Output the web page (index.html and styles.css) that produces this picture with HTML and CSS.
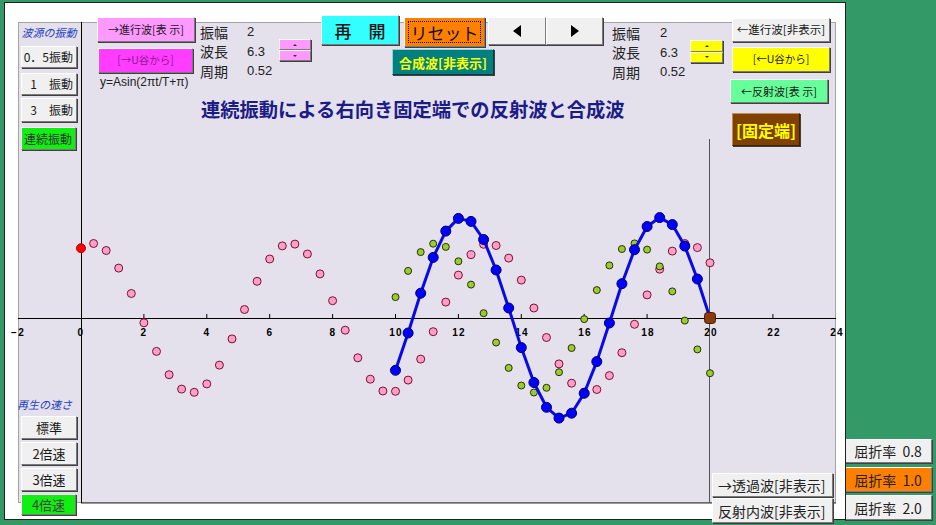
FILE: index.html
```html
<!DOCTYPE html>
<html lang="ja">
<head>
<meta charset="utf-8">
<title>連続振動による右向き固定端での反射波と合成波</title>
<link rel="stylesheet" href="styles.css">
</head>
<body>
<div class="stage">
  <div class="frame">
    <svg class="plot" viewBox="5 3 840 516" width="840" height="516">
      <rect class="bg" x="18.5" y="22.5" width="817" height="480"/>
      <line class="bottomline" x1="81" y1="503" x2="836" y2="503"/>
      <line class="axis" x1="81.5" y1="22" x2="81.5" y2="503"/>
      <line class="axis" x1="18" y1="318.5" x2="836" y2="318.5"/>
      <line class="fixline" x1="709.5" y1="139" x2="709.5" y2="503"/>
      <g class="ticks">
        <line x1="143.9" y1="314" x2="143.9" y2="318"/>
        <line x1="206.8" y1="314" x2="206.8" y2="318"/>
        <line x1="269.7" y1="314" x2="269.7" y2="318"/>
        <line x1="332.6" y1="314" x2="332.6" y2="318"/>
        <line x1="395.5" y1="314" x2="395.5" y2="318"/>
        <line x1="458.4" y1="314" x2="458.4" y2="318"/>
        <line x1="521.3" y1="314" x2="521.3" y2="318"/>
        <line x1="584.2" y1="314" x2="584.2" y2="318"/>
        <line x1="647.1" y1="314" x2="647.1" y2="318"/>
        <line x1="772.9" y1="314" x2="772.9" y2="318"/>
      </g>
      <g class="tlabels">
        <text x="18" y="336">−2</text>
        <text x="81" y="336">0</text>
        <text x="144" y="336">2</text>
        <text x="207" y="336">4</text>
        <text x="270" y="336">6</text>
        <text x="333" y="336">8</text>
        <text x="396" y="336">10</text>
        <text x="459" y="336">12</text>
        <text x="522" y="336">14</text>
        <text x="585" y="336">16</text>
        <text x="648" y="336">18</text>
        <text x="711" y="336">20</text>
        <text x="774" y="336">22</text>
        <text x="837" y="336">24</text>
      </g>
      <g id="waves"></g>
    </svg>

    <div class="leftcol">
      <div class="caption">波源の振動</div>
      <div class="btn lb b05">0．5振動</div>
      <div class="btn lb b1">1　振動</div>
      <div class="btn lb b3">3　振動</div>
      <div class="btn lb green bc">連続振動</div>
      <div class="spacer"></div>
      <div class="caption cap2">再生の速さ</div>
      <div class="btn sb">標準</div>
      <div class="btn sb">2倍速</div>
      <div class="btn sb">3倍速</div>
      <div class="btn sb green s4">4倍速</div>
    </div>

    <div class="main">
      <div class="upper">
        <div class="center">
          <div class="toprow">
            <div class="groupA">
              <div class="btn pink">→進行波[表 示]</div>
              <div class="btn magenta">[→U谷から]</div>
              <div class="formula">y=Asin(2πt/T+π)</div>
            </div>
            <div class="params">
              <span class="pl">振幅</span><span class="pv">2</span>
              <span class="pl">波長</span><span class="pv">6.3</span>
              <span class="pl">周期</span><span class="pv">0.52</span>
            </div>
            <div class="spin pinkspin"><span class="half up"></span><span class="half down"></span></div>
            <div class="midgroup">
              <div class="midrow">
                <div class="btn cyan">再　開</div>
                <div class="btn orange"><span class="focus">リセット</span></div>
                <div class="arrows">
                  <div class="btn arrow"><svg width="8" height="12" viewBox="0 0 8 12"><polygon points="8,0 8,12 0,6"/></svg></div>
                  <div class="btn arrow"><svg width="8" height="12" viewBox="0 0 8 12"><polygon points="0,0 0,12 8,6"/></svg></div>
                </div>
              </div>
              <div class="btn teal">合成波[非表示]</div>
            </div>
            <div class="params rparams">
              <span class="pl">振幅</span><span class="pv">2</span>
              <span class="pl">波長</span><span class="pv">6.3</span>
              <span class="pl">周期</span><span class="pv">0.52</span>
            </div>
            <div class="spin yellowspin"><span class="half up"></span><span class="half down"></span></div>
          </div>
          <h1 class="title">連続振動による右向き固定端での反射波と合成波</h1>
        </div>
        <div class="rightcol">
          <div class="btn rb r1">←進行波[非表示]</div>
          <div class="btn rb yellow">[←U谷から]</div>
          <div class="btn rb lgreen">←反射波[表 示]</div>
          <div class="btn brown">[固定端]</div>
        </div>
      </div>
      <div class="bottomr">
        <div class="btn wide w1">→透過波[非表示]</div>
        <div class="btn wide w2">反射内波[非表示]</div>
      </div>
    </div>
  </div>

  <div class="side">
    <div class="btn kb k1">屈折率&nbsp; 0.8</div>
    <div class="btn kb k2 orangebg">屈折率&nbsp; 1.0</div>
    <div class="btn kb k3">屈折率&nbsp; 2.0</div>
  </div>
</div>
<script src="script.js"></script>
</body>
</html>
```

FILE: styles.css
```css
html, body {
  margin: 0;
  padding: 0;
  background: #339966;
}

.stage {
  width: 936px;
  height: 525px;
  display: flex;
  align-items: flex-start;
  background: #339966;
  overflow: hidden;
  font-family: "Noto Sans CJK JP", sans-serif;
}

.frame {
  position: relative;
  box-sizing: border-box;
  width: 842px;
  height: 518px;
  margin: 2px 0 0 4px;
  border: 1px solid #202020;
  background: #ffffff;
  display: flex;
}

.plot {
  position: absolute;
  top: 0;
  left: 0;
  z-index: 0;
}

.plot .bg { fill: #e4e0ec; stroke: #a4a4a4; stroke-width: 1; }
.plot .bottomline { stroke: #303030; stroke-width: 1; }
.plot .axis { stroke: #000000; stroke-width: 1; }
.plot .fixline { stroke: #555555; stroke-width: 1; }
.plot .ticks line { stroke: #000000; stroke-width: 1; }
.plot .tlabels text {
  font-family: "Liberation Sans", Arial, sans-serif;
  font-weight: bold;
  font-size: 10px;
  letter-spacing: 1.2px;
  text-anchor: middle;
  fill: #000000;
}

.plot .dp { fill: #ff9ec8; stroke: #7a1030; stroke-width: 1; }
.plot .dg { fill: #99cc33; stroke: #2a3000; stroke-width: 1; }
.plot .bl { fill: none; stroke: #0a0ae6; stroke-width: 3; stroke-linejoin: round; }
.plot .db { fill: #0000ff; stroke: #000060; stroke-width: 1; }
.plot .dr { fill: #ff0000; stroke: #c00000; stroke-width: 1; }
.plot .end { fill: #8b3a0e; stroke: #4a1a00; stroke-width: 1; }

/* ---------- buttons ---------- */
.btn {
  box-sizing: border-box;
  display: flex;
  align-items: center;
  justify-content: center;
  background: #f0f0f0;
  border: 1px solid;
  border-color: #ffffff #7a7a7a #7a7a7a #ffffff;
  box-shadow: 1px 1px 0 #404040;
  color: #1a1a1a;
  white-space: nowrap;
  line-height: 1;
  overflow: hidden;
  font-family: "Noto Sans CJK JP", sans-serif;
}

/* ---------- left column ---------- */
.leftcol {
  position: relative;
  z-index: 1;
  width: 56px;
  margin-left: 16px;
  height: 516px;
  display: flex;
  flex-direction: column;
  flex-shrink: 0;
}

.caption {
  height: 12px;
  line-height: 12px;
  font-size: 11px;
  font-style: italic;
  color: #1f3fbf;
  text-align: center;
  white-space: nowrap;
  margin-top: 23px;
}

.cap2 {
  margin-top: 0;
  margin-left: -4px;
  text-align: left;
}

.lb {
  width: 56px;
  height: 22px;
  font-size: 12px;
  justify-content: flex-end;
  padding-right: 3px;
}

.b05 { margin-top: 8px; }
.b1 { margin-top: 5px; }
.b3 { margin-top: 3px; height: 24px; }
.bc { margin-top: 5px; height: 23px; width: 55px; color: #333; }

.green { background: #11ee11; }

.spacer { flex: 1; }

.sb {
  width: 56px;
  height: 23px;
  font-size: 13px;
  margin-top: 3px;
}
.cap2 + .sb { margin-top: 6px; }
.s4 { height: 21px; width: 55px; margin-bottom: 4px; color: #444; }

/* ---------- main ---------- */
.main {
  position: relative;
  z-index: 1;
  flex: 1;
  height: 516px;
  display: flex;
  flex-direction: column;
}

.upper {
  display: flex;
  align-items: flex-start;
}

.center {
  margin-left: 20px;
  width: 626px;
  display: flex;
  flex-direction: column;
}

.toprow {
  display: flex;
  align-items: flex-start;
}

.groupA {
  width: 98px;
  margin-top: 14px;
  display: flex;
  flex-direction: column;
}

.pink {
  width: 98px;
  height: 25px;
  background: #ff99ff;
  font-size: 11px;
}

.magenta {
  width: 95px;
  height: 25px;
  margin-top: 6px;
  margin-left: 1px;
  background: #ff3cff;
  color: #8e1a8e;
  font-size: 10.5px;
}

.formula {
  margin-top: 2px;
  margin-left: 3px;
  height: 14px;
  line-height: 14px;
  font-family: "Liberation Sans", Arial, sans-serif;
  font-size: 12px;
  color: #222;
  white-space: nowrap;
}

.params {
  margin-left: 5px;
  margin-top: 19px;
  width: 79px;
  display: grid;
  grid-template-columns: 47px auto;
  grid-auto-rows: 19.5px;
  align-items: center;
}

.rparams {
  margin-left: 9px;
  margin-top: 20px;
  width: 78px;
  grid-template-columns: 48px auto;
}

.pl {
  font-size: 14px;
  line-height: 1;
  color: #222;
}

.pv {
  font-family: "Liberation Sans", Arial, sans-serif;
  font-size: 13px;
  line-height: 1;
  color: #222;
}

.spin {
  box-sizing: border-box;
  display: flex;
  flex-direction: column;
  box-shadow: 1px 1px 0 #404040;
}

.pinkspin { width: 32px; height: 22px; margin-top: 36px; }
.yellowspin { width: 33px; height: 23px; margin-top: 37px; }

.half {
  flex: 1;
  display: flex;
  align-items: center;
  justify-content: center;
  border: 1px solid;
  border-color: #ffffff #7a7a7a #7a7a7a #ffffff;
}

.pinkspin .half { background: #ff99ff; }
.yellowspin .half { background: #ffff00; }

.half::after {
  content: "";
  width: 0;
  height: 0;
  border-left: 2px solid transparent;
  border-right: 2px solid transparent;
}

.up::after { border-bottom: 2px solid #333; }
.down::after { border-top: 2px solid #333; }

.midgroup {
  margin-left: 10px;
  margin-top: 12px;
  display: flex;
  flex-direction: column;
}

.midrow {
  display: flex;
  align-items: flex-start;
}

.cyan {
  width: 78px;
  height: 30px;
  background: #33ffff;
  font-size: 17px;
  font-weight: 500;
  color: #111;
}

.orange {
  width: 81px;
  height: 30px;
  margin-top: 2px;
  margin-left: 5px;
  padding: 3px;
  background: #ff8000;
}

.focus {
  flex: 1;
  align-self: stretch;
  display: flex;
  align-items: center;
  justify-content: center;
  border: 1px dotted #000;
  font-size: 17px;
  color: #111;
}

.arrows {
  display: flex;
  margin-left: 3px;
  margin-top: 2px;
}

.arrow {
  width: 58px;
  height: 28px;
}
.arrow + .arrow { width: 57px; }
.arrow svg polygon { fill: #000; }

.teal {
  width: 102px;
  height: 26px;
  margin-top: 2px;
  margin-left: 71px;
  background: #008080;
  border-color: #9fd0d0 #004040 #004040 #9fd0d0;
  color: #ffff00;
  font-size: 13px;
  font-weight: bold;
}

.title {
  margin: 8px 0 0 104px;
  font-size: 19.3px;
  line-height: 24px;
  font-weight: bold;
  color: #1c1c86;
  white-space: nowrap;
}

.rightcol {
  margin-left: 7px;
  margin-top: 15px;
  width: 100px;
  display: flex;
  flex-direction: column;
}

.rb {
  width: 98px;
  height: 25px;
  font-size: 11px;
}

.r1 { margin-left: 2px; height: 24px; font-size: 11.5px; }
.yellow { margin-left: 2px; margin-top: 5px; background: #ffff00; font-size: 10.5px; }
.lgreen { margin-top: 7px; height: 24px; background: #66ff99; }

.brown {
  width: 68px;
  height: 33px;
  margin-left: 2px;
  margin-top: 10px;
  background: #804000;
  border-color: #c08a5a #402000 #402000 #c08a5a;
  color: #ffff00;
  font-size: 16px;
  font-weight: bold;
}

.bottomr {
  margin-top: auto;
  align-self: flex-end;
  margin-right: 12px;
  margin-bottom: -4px;
  display: flex;
  flex-direction: column;
}

.wide {
  width: 121px;
  height: 25px;
  font-size: 14px;
  justify-content: flex-start;
  padding-left: 5px;
  color: #222;
}
.w1 { height: 24px; }
.w2 { margin-top: 1px; }

/* ---------- side column ---------- */
.side {
  margin-left: -2px;
  width: 88px;
  height: 525px;
  box-sizing: border-box;
  padding-bottom: 5px;
  display: flex;
  flex-direction: column;
  justify-content: flex-end;
  flex-shrink: 0;
}

.kb {
  width: 88px;
  height: 25px;
  font-size: 14px;
  color: #222;
}
.k1 { height: 24px; }
.k2 { margin-top: 4px; }
.k3 { margin-top: 3px; }
.orangebg { background: #ff8000; }
```

FILE: script.js
```js
(function () {
  var NS = 'http://www.w3.org/2000/svg';
  var g = document.getElementById('waves');
  var k = 2 * Math.PI / 6.3;
  var a = 0.36;
  function px(x) { return 81 + 31.45 * x; }
  function py(v) { return 318 - 37.3 * v; }
  function yi(x) { return 2 * Math.cos(k * (x - a)); }
  function el(name, attrs) {
    var e = document.createElementNS(NS, name);
    for (var n in attrs) e.setAttribute(n, attrs[n]);
    g.appendChild(e);
    return e;
  }
  var i, x;
  for (i = 1; i <= 50; i++) {
    x = i * 0.4;
    el('circle', { cx: px(x).toFixed(1), cy: py(yi(x)).toFixed(1), r: 4, 'class': 'dp' });
  }
  for (i = 25; i <= 50; i++) {
    x = i * 0.4;
    el('circle', { cx: px(x).toFixed(1), cy: py(-yi(40 - x)).toFixed(1), r: 3.5, 'class': 'dg' });
  }
  var pts = [];
  for (i = 25; i <= 50; i++) {
    x = i * 0.4;
    pts.push(px(x).toFixed(1) + ',' + py(yi(x) - yi(40 - x)).toFixed(1));
  }
  el('polyline', { points: pts.join(' '), 'class': 'bl' });
  for (i = 25; i < 50; i++) {
    x = i * 0.4;
    el('circle', { cx: px(x).toFixed(1), cy: py(yi(x) - yi(40 - x)).toFixed(1), r: 5, 'class': 'db' });
  }
  el('rect', { x: 704.5, y: 312.5, width: 11, height: 11, rx: 3, 'class': 'end' });
  el('circle', { cx: 81, cy: py(yi(0)).toFixed(1), r: 4.5, 'class': 'dr' });
})();
```
